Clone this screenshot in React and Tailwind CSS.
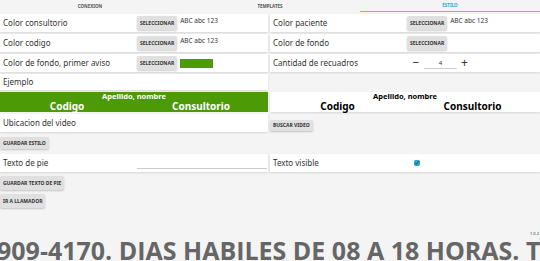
import { useState } from 'react'

const font = { fontFamily: '"Noto Sans", "Open Sans", sans-serif' }

function Btn({ children, className = '' }) {
  return (
    <button
      className={`block bg-[#e0e0e0] text-[#333] text-[5px] font-bold uppercase px-[3px] rounded-[2px] shadow-[0_1px_2px_rgba(0,0,0,0.2)] leading-none ${className}`}
    >
      {children}
    </button>
  )
}

function Card({ children, className = 'h-[18px]' }) {
  return (
    <div className={`bg-white shadow-[0_1px_2px_rgba(0,0,0,0.12)] flex items-center ${className}`}>
      {children}
    </div>
  )
}

function ColorRow({ label, sample, swatch }) {
  return (
    <Card>
      <span className="w-[137px] pl-[3px] text-[8px] text-[#333]">{label}</span>
      <Btn className="h-[14px]">Seleccionar</Btn>
      {sample && <span className="ml-[3px] self-start mt-[2px] text-[6.5px] text-[#333]">ABC abc 123</span>}
      {swatch && <span className="ml-[3px] w-[33px] h-[9px] bg-[#4c9a06]" />}
    </Card>
  )
}

function Preview({ dark }) {
  const c = dark ? 'bg-[#4c9a06] text-white' : 'bg-white text-black shadow-[0_1px_2px_rgba(0,0,0,0.12)]'
  return (
    <div className={`${c} h-[20px] flex flex-col items-center leading-none`}>
      <div className="text-[7.5px] font-bold mt-[1px]">Apellido, nombre</div>
      <div className="w-full grid grid-cols-2 text-[10px] font-bold">
        <span className="text-center">Codigo</span>
        <span className="text-center">Consultorio</span>
      </div>
    </div>
  )
}

export default function App() {
  const [count, setCount] = useState(4)
  const [visible, setVisible] = useState(true)

  return (
    <div className="w-[540px] h-[261px] bg-[#f4f4f4] overflow-hidden relative" style={font}>
      <div className="grid grid-cols-3 h-[12px] text-[4.5px] font-bold text-[#555]">
        <div className="flex items-center justify-center">CONEXION</div>
        <div className="flex items-center justify-center">TEMPLATES</div>
        <div className="flex items-center justify-center text-[#29a9e0] border-b-[1.5px] border-[#5bc0eb]">ESTILO</div>
      </div>

      <div className="grid grid-cols-[268px_270px] gap-x-[2px] gap-y-[2px] mt-[2px]">
        <ColorRow label="Color consultorio" sample />
        <ColorRow label="Color paciente" sample />
        <ColorRow label="Color codigo" sample />
        <ColorRow label="Color de fondo" />
        <ColorRow label="Color de fondo, primer aviso" swatch />
        <Card>
          <span className="w-[141px] pl-[3px] text-[8px] text-[#333]">Cantidad de recuadros</span>
          <button onClick={() => setCount(count - 1)} className="text-[12px] leading-none text-[#333] w-[10px]">−</button>
          <input
            value={count}
            readOnly
            className="ml-[3px] w-[33px] h-[12px] border-b border-[#ccc] text-center text-[6px] text-[#333] outline-none"
          />
          <button onClick={() => setCount(count + 1)} className="ml-[4px] text-[12px] leading-none text-[#333]">+</button>
        </Card>
        <Card className="h-[16px]">
          <span className="pl-[3px] text-[8px] text-[#333]">Ejemplo</span>
        </Card>
        <div />
        <Preview dark />
        <Preview />
        <Card>
          <span className="pl-[3px] text-[8px] text-[#333]">Ubicacion del video</span>
        </Card>
        <div className="flex items-start pt-[6px]">
          <Btn className="h-[11px]">Buscar video</Btn>
        </div>
      </div>

      <Btn className="h-[12px] mt-[5px]">Guardar estilo</Btn>

      <div className="grid grid-cols-[268px_270px] gap-x-[2px] mt-[5px]">
        <Card>
          <span className="w-[137px] pl-[3px] text-[8px] text-[#333]">Texto de pie</span>
          <input className="w-[130px] h-[12px] border-b border-[#ccc] outline-none text-[8px]" />
        </Card>
        <Card>
          <span className="w-[144px] pl-[3px] text-[8px] text-[#333]">Texto visible</span>
          <input
            type="checkbox"
            checked={visible}
            onChange={e => setVisible(e.target.checked)}
            className="w-[6px] h-[6px] accent-[#29a9e0]"
          />
        </Card>
      </div>

      <Btn className="h-[14px] mt-[4px]">Guardar texto de pie</Btn>
      <Btn className="h-[14px] mt-[4px]">Ir a llamador</Btn>

      <div className="absolute right-[1px] top-[232px] text-[4px] leading-none text-[#333]">1.0.2</div>
      <div className="absolute left-0 top-[239px] w-full overflow-hidden whitespace-nowrap">
        <div className="ml-[-3px] text-[25px] font-bold text-[#666] leading-[22px]" style={{ fontFamily: '"Open Sans", sans-serif' }}>
          909-4170. DIAS HABILES DE 08 A 18 HORAS. TODOS LOS DIAS
        </div>
      </div>
    </div>
  )
}
